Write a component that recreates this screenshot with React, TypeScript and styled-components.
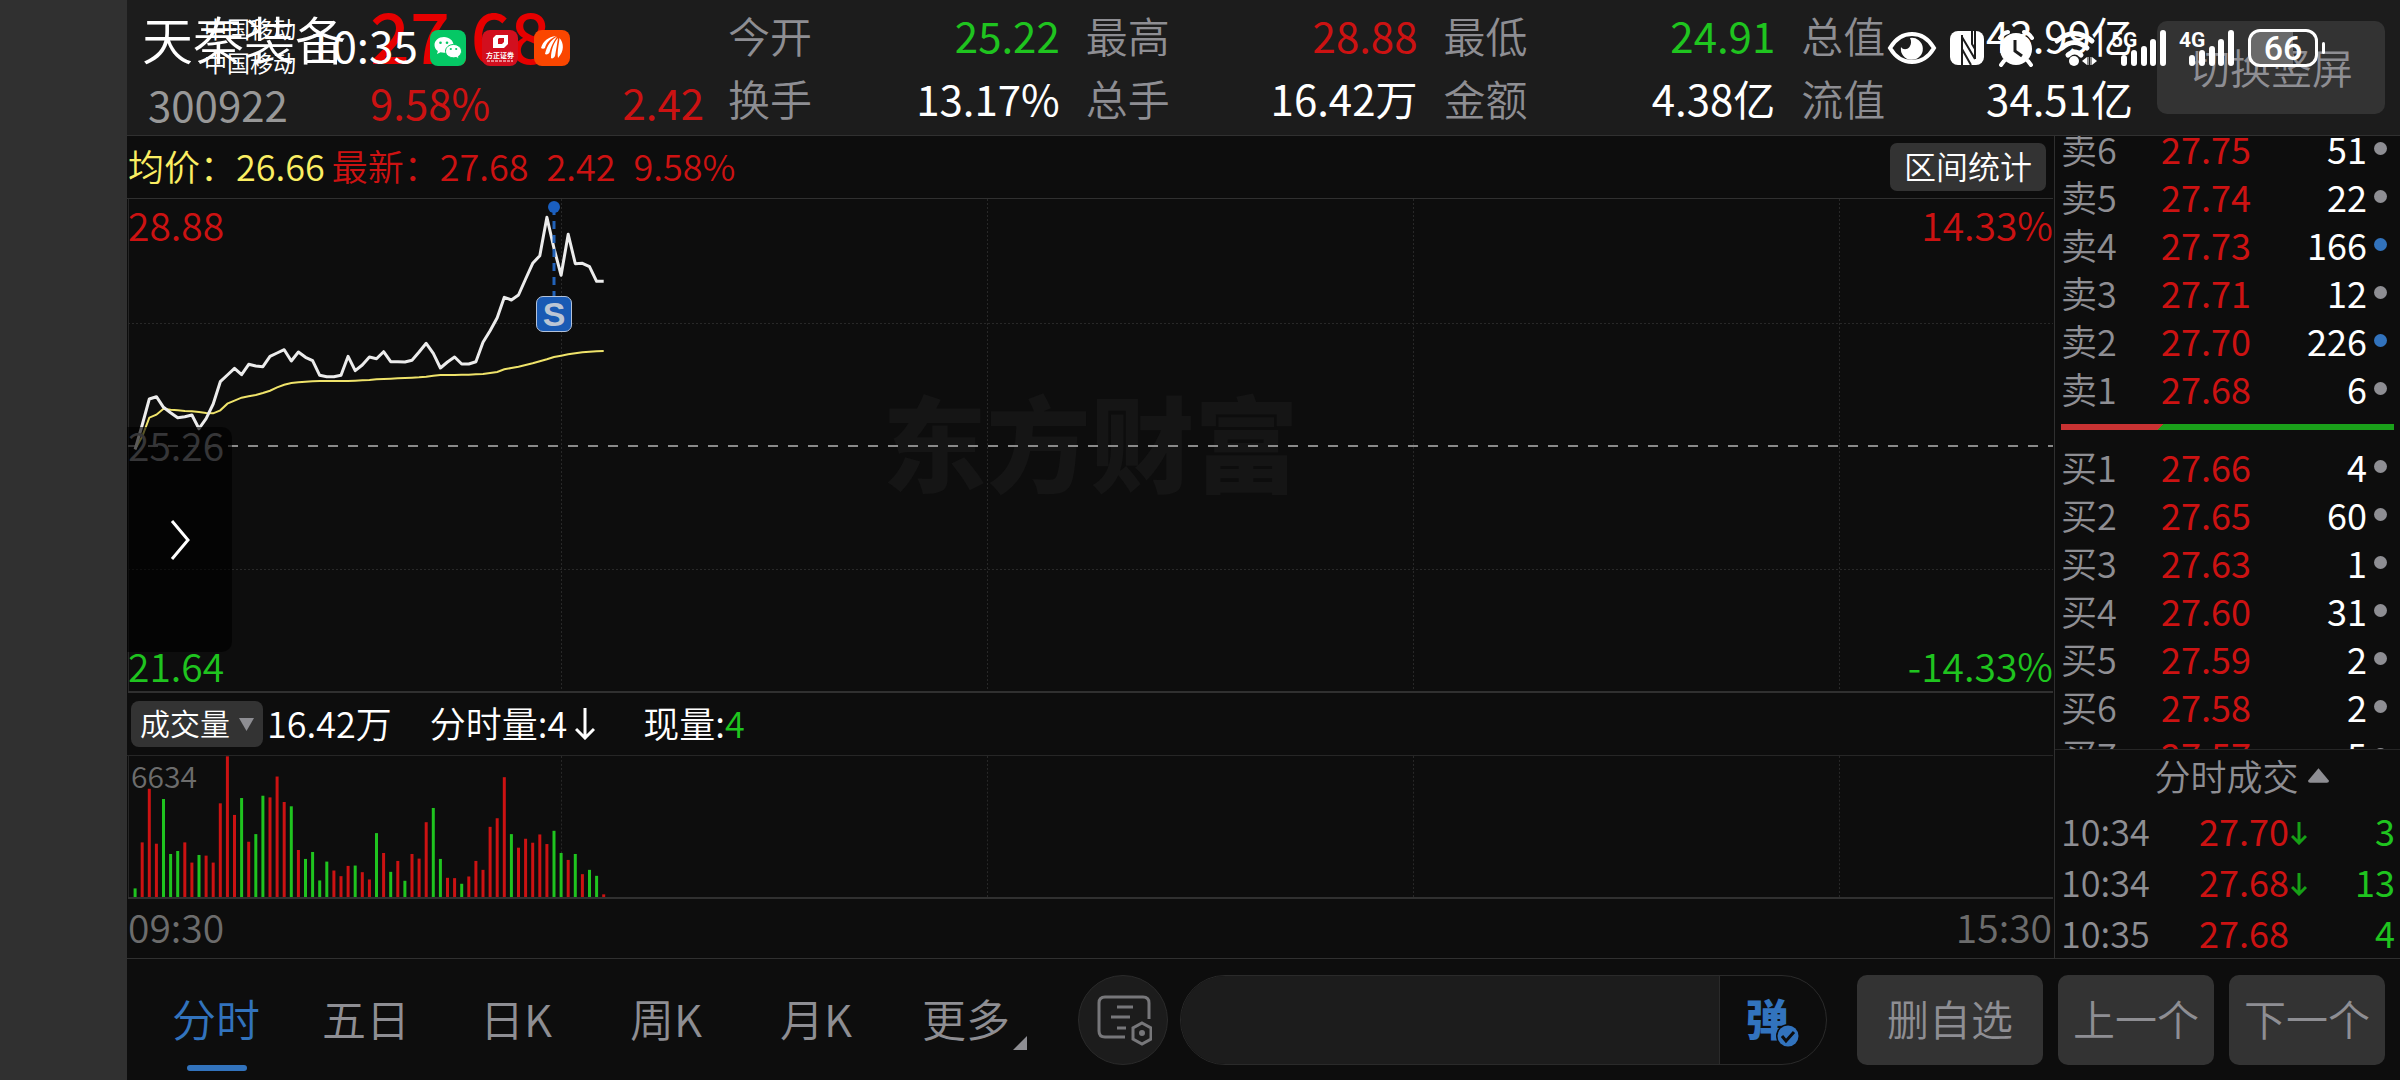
import React from "react";
import styled, { createGlobalStyle, css } from "styled-components";

const color = {
  gutter: "#303030",
  page: "#0d0d0d",
  header: "#1c1c1c",
  line: "#303030",
  button: "#333333",
  grey: "#8e8e93",
  dim: "#6c6c6c",
  red: "#cc1212",
  green: "#1fc41f",
  yellow: "#fbee62",
  blue: "#3273bd",
  white: "#ffffff",
};

type Tone = "grey" | "dim" | "red" | "green" | "yellow" | "white";

const toneWeight = (tone: Tone) => (tone === "grey" || tone === "dim" ? 350 : 400);

const Global = createGlobalStyle`
  * { box-sizing: border-box; }
  body {
    margin: 0;
    background: ${color.page};
    font-family: "Noto Sans CJK SC", "Noto Sans", sans-serif;
    font-weight: 350;
  }
  button, input, select {
    font: inherit;
    color: inherit;
    border: 0;
    margin: 0;
    padding: 0;
    background: none;
  }
`;

const Screen = styled.div`
  position: relative;
  display: flex;
  height: 100vh;
  overflow: hidden;
  padding-left: 127px;
  background: ${color.gutter};
  color: ${color.white};
`;

const Terminal = styled.div`
  flex: 1;
  min-width: 0;
  display: flex;
  flex-direction: column;
  background: ${color.page};
`;

const Text = styled.span<{ $tone?: Tone }>`
  color: ${(p) => color[p.$tone ?? "white"]};
  white-space: nowrap;
`;

/* ---------- header ---------- */

const Header = styled.header`
  display: flex;
  height: 136px;
  padding: 0 15px;
  background: ${color.header};
  border-bottom: 1px solid ${color.line};
  font-size: 42px;
`;

const Identity = styled.div`
  width: 228px;
  padding-top: 3px;
`;

const StockName = styled.h1`
  margin: 0;
  font-size: 51px;
  font-weight: 350;
  line-height: 70px;
  white-space: nowrap;
`;

const StockCode = styled.div`
  padding-left: 6px;
  line-height: 62px;
  color: #989898;
  font-weight: 400;
`;

const Quote = styled.div`
  width: 334px;
`;

const LastPrice = styled.div`
  font-size: 70px;
  font-weight: 500;
  line-height: 68px;
  color: #e60000;
`;

const Change = styled.div`
  display: flex;
  justify-content: space-between;
  line-height: 68px;
  color: ${color.red};
  font-weight: 400;
`;

const Stats = styled.dl`
  flex: 1;
  display: grid;
  grid-template-columns: repeat(4, 1fr);
  grid-auto-rows: 63px;
  column-gap: 26px;
  margin: 0 24px;
  padding-top: 3px;
  line-height: 63px;
`;

const Stat = styled.div`
  display: flex;
  justify-content: space-between;
`;

const StatLabel = styled.dt`
  color: ${color.grey};
`;

const StatValue = styled.dd<{ $tone: Tone }>`
  margin: 0;
  color: ${(p) => color[p.$tone]};
  font-weight: ${(p) => toneWeight(p.$tone)};
`;

const Button = styled.button<{ $width: number; $height: number }>`
  flex: none;
  width: ${(p) => p.$width}px;
  height: ${(p) => p.$height}px;
  border-radius: 10px;
  background: ${color.button};
  color: ${color.grey};
  white-space: nowrap;
`;

const RotateButton = styled(Button)`
  margin-top: 21px;
  padding-bottom: 4px;
  font-size: 41px;
`;

/* ---------- system status bar, drawn over the header ---------- */

const StatusBar = styled.div`
  position: absolute;
  top: 0;
  left: 0;
  right: 0;
  height: 96px;
  padding: 0 82px 0 204px;
  display: flex;
  align-items: center;
  pointer-events: none;
`;

const Carriers = styled.div`
  width: 104px;
  font-size: 23px;
  font-weight: 400;
  line-height: 34px;
  padding-bottom: 6px;
`;

const Clock = styled.time`
  width: 122px;
  padding-bottom: 8px;
  font-size: 44px;
  font-weight: 400;
  line-height: 60px;
`;

const IconRow = styled.div<{ $gap: number }>`
  display: flex;
  align-items: center;
  gap: ${(p) => p.$gap}px;
  svg { display: block; flex: none; overflow: visible; }
`;

const Spring = styled.div`
  flex: 1;
`;

const Battery = styled.div`
  position: relative;
  display: flex;
  align-items: center;
  justify-content: center;
  width: 70px;
  height: 38px;
  border: 3px solid ${color.white};
  border-radius: 12px;
  background: linear-gradient(90deg, #6a6a6a 66%, transparent 66%);
  font-family: Roboto, sans-serif;
  font-size: 34px;
  font-weight: 500;
  line-height: 32px;
  &::after {
    content: "";
    position: absolute;
    right: -10px;
    top: 10px;
    width: 3px;
    height: 12px;
    border-radius: 2px;
    background: ${color.white};
  }
`;

/* ---------- main area ---------- */

const Body = styled.main`
  flex: 1;
  min-height: 0;
  display: flex;
`;

const Charts = styled.section`
  flex: 1;
  min-width: 0;
  display: flex;
  flex-direction: column;
  padding-right: 1px;
`;

const InfoBar = styled.div`
  display: flex;
  align-items: center;
  height: 63px;
  padding-right: 7px;
  border-bottom: 1px solid ${color.line};
  font-size: 36px;
  line-height: 54px;
`;

const InfoGroup = styled.div<{ $tone: Tone }>`
  display: flex;
  gap: 18px;
  margin-right: 6px;
  padding: 0 0 4px 1px;
  color: ${(p) => color[p.$tone]};
`;

const RangeButton = styled(Button)`
  margin-left: auto;
  border-radius: 7px;
  color: ${color.white};
  font-size: 32px;
  line-height: 44px;
  padding-bottom: 4px;
`;

const Plot = styled.div<{ $height?: number }>`
  position: relative;
  ${(p) => (p.$height ? css`height: ${p.$height}px;` : css`flex: 1; min-height: 0;`)}
  margin-left: 1px;
  border-bottom: 2px solid ${color.line};
  > svg {
    position: relative;
    display: block;
    width: 100%;
    height: 100%;
  }
`;

const Watermark = styled.div`
  position: absolute;
  inset: 0;
  display: flex;
  align-items: center;
  justify-content: center;
  padding-bottom: 10px;
  color: #151515;
  font-size: 104px;
  font-weight: 900;
  line-height: 120px;
`;

const AxisLabel = styled.span<{ $tone: Tone; $v: "top" | "middle" | "bottom"; $h: "left" | "right" }>`
  position: absolute;
  ${(p) => p.$h}: 0;
  ${(p) =>
    p.$v === "top"
      ? css`top: 0;`
      : p.$v === "bottom"
      ? css`bottom: 0;`
      : css`top: calc(50% - 26px);`}
  color: ${(p) => color[p.$tone]};
  font-size: 39px;
  line-height: ${(p) => (p.$v === "bottom" ? 52 : 50)}px;
`;

const VolumeMax = styled.span`
  position: absolute;
  top: 0;
  left: 3px;
  color: ${color.dim};
  font-size: 30px;
  line-height: 38px;
`;

const SellMarker = styled.span`
  position: absolute;
  top: 97px;
  left: 408px;
  width: 36px;
  height: 36px;
  border: 1px solid #b4c2d8;
  border-radius: 7px;
  background: #195ab4;
  color: #bcc6d4;
  font-family: "Liberation Sans", sans-serif;
  font-size: 34px;
  font-weight: 700;
  line-height: 34px;
  text-align: center;
`;

const Drawer = styled.button`
  position: absolute;
  left: -1px;
  top: 228px;
  width: 105px;
  height: 225px;
  border-radius: 0 10px 10px 0;
  background: rgba(0, 0, 0, 0.62);
  display: flex;
  align-items: center;
  justify-content: center;
`;

const VolumeBar = styled.div`
  display: flex;
  align-items: center;
  height: 63px;
  padding-left: 4px;
  border-bottom: 1px solid #262626;
  font-size: 36px;
  line-height: 54px;
`;

const VolumeItem = styled.span<{ $after: number }>`
  display: flex;
  align-items: center;
  margin-right: ${(p) => p.$after}px;
  padding-bottom: 4px;
  white-space: nowrap;
  svg { margin: 4px 0 0 8px; }
`;

const Picker = styled.label`
  display: flex;
  align-items: center;
  width: 132px;
  height: 46px;
  margin-right: 4px;
  padding: 0 9px;
  border-radius: 8px;
  background: ${color.button};
`;

const PickerSelect = styled.select`
  appearance: none;
  flex: 1;
  min-width: 0;
  height: 46px;
  padding-bottom: 4px;
  font-size: 30px;
  line-height: 42px;
  outline: none;
`;

const TimeAxis = styled.div`
  display: flex;
  justify-content: space-between;
  height: 59px;
  padding: 0 1px;
  color: ${color.dim};
  font-size: 39px;
  line-height: 54px;
`;

/* ---------- order book ---------- */

const Side = styled.aside`
  flex: none;
  display: flex;
  flex-direction: column;
  width: 346px;
  border-left: 1px solid ${color.line};
  font-size: 36px;
`;

const Book = styled.div`
  flex: 1;
  min-height: 0;
  overflow: hidden;
`;

const BookScroll = styled.div`
  margin-top: -12px;
`;

const Table = styled.table`
  width: 100%;
  table-layout: fixed;
  border-collapse: collapse;
`;

const Cell = styled.td<{ $tone: Tone; $row: number; $width?: number; $align?: string }>`
  padding: 0;
  height: ${(p) => p.$row}px;
  line-height: ${(p) => p.$row}px;
  ${(p) => p.$width && css`width: ${p.$width}px;`}
  text-align: ${(p) => p.$align ?? "left"};
  color: ${(p) => color[p.$tone]};
  font-weight: ${(p) => toneWeight(p.$tone)};
  white-space: nowrap;
  &:first-child { padding-left: 6px; }
  svg { vertical-align: 1px; margin-left: 2px; }
`;

const Dot = styled.i<{ $big: boolean }>`
  display: block;
  width: 13px;
  height: 13px;
  margin-left: 7px;
  border-radius: 50%;
  background: ${(p) => (p.$big ? color.blue : color.grey)};
`;

const Ratio = styled.div`
  display: flex;
  height: 30px;
  padding: 12px 6px 12px 6px;
`;

const RatioPart = styled.div<{ $sell?: boolean }>`
  flex: ${(p) => (p.$sell ? 71 : 29)};
  background: ${(p) =>
    p.$sell ? "linear-gradient(135deg, #c83232 4px, #1aa01a 4px)" : "#c83232"};
`;

const TradesTitle = styled.button`
  display: flex;
  align-items: center;
  justify-content: center;
  gap: 9px;
  height: 56px;
  padding: 0 0 4px 28px;
  border-top: 1px solid #262626;
  color: ${color.grey};
  line-height: 51px;
`;

/* ---------- bottom bar ---------- */

const Footer = styled.footer`
  display: flex;
  align-items: center;
  height: 122px;
  padding: 0 15px;
  border-top: 1px solid ${color.line};
`;

const Tabs = styled.nav`
  display: flex;
  margin-right: 36px;
`;

const Tab = styled.button<{ $active?: boolean }>`
  position: relative;
  width: 150px;
  height: 121px;
  padding: 0 2px 4px 0;
  color: ${(p) => (p.$active ? color.blue : color.grey)};
  font-size: 44px;
  ${(p) =>
    p.$active &&
    css`
      &::after {
        content: "";
        position: absolute;
        left: 45px;
        bottom: 9px;
        width: 60px;
        height: 6px;
        border-radius: 3px;
        background: ${color.blue};
      }
    `}
  svg {
    position: absolute;
    right: 15px;
    bottom: 30px;
  }
`;

const RoundButton = styled.button`
  display: flex;
  align-items: center;
  justify-content: center;
  width: 90px;
  height: 90px;
  margin-right: 12px;
  border: 1px solid #2a2a2a;
  border-radius: 50%;
  background: ${color.header};
`;

const Composer = styled.div`
  flex: 1;
  display: flex;
  height: 90px;
  margin-right: 30px;
  overflow: hidden;
  border: 1px solid #2a2a2a;
  border-radius: 45px;
`;

const ComposerInput = styled.input`
  flex: 1;
  min-width: 0;
  padding: 0 40px;
  background: ${color.header};
  outline: none;
  font-size: 36px;
`;

const DanmuButton = styled.button`
  position: relative;
  width: 107px;
  padding: 0 12px 6px 0;
  border-left: 1px solid #2a2a2a;
  color: ${color.blue};
  font-size: 43px;
  font-weight: 900;
  svg {
    position: absolute;
    left: 56px;
    bottom: 16px;
  }
`;

const Actions = styled.div`
  display: flex;
  gap: 15px;
  font-size: 42px;
  ${Button} { padding-bottom: 4px; }
`;

/* ---------- data ---------- */

const stats: [string, string, Tone][] = [
  ["今开", "25.22", "green"],
  ["最高", "28.88", "red"],
  ["最低", "24.91", "green"],
  ["总值", "43.99亿", "white"],
  ["换手", "13.17%", "white"],
  ["总手", "16.42万", "white"],
  ["金额", "4.38亿", "white"],
  ["流值", "34.51亿", "white"],
];

const sells: [string, string, number][] = [
  ["卖6", "27.75", 51],
  ["卖5", "27.74", 22],
  ["卖4", "27.73", 166],
  ["卖3", "27.71", 12],
  ["卖2", "27.70", 226],
  ["卖1", "27.68", 6],
];

const buys: [string, string, number][] = [
  ["买1", "27.66", 4],
  ["买2", "27.65", 60],
  ["买3", "27.63", 1],
  ["买4", "27.60", 31],
  ["买5", "27.59", 2],
  ["买6", "27.58", 2],
  ["买7", "27.57", 5],
];

const trades: [string, string, boolean, number][] = [
  ["10:34", "27.70", true, 3],
  ["10:34", "27.68", true, 13],
  ["10:35", "27.68", false, 4],
];

const MINUTE = 7.1;

// One value a minute, in thirds of a plot unit, counted down from 57 at the upper edge.
const price = [
  808, 735, 657, 650, 682, 698, 713, 710, 705, 746, 716, 672, 605, 585, 565, 584, 553, 558, 560, 529,
  519, 509, 543, 516, 532, 542, 586, 590, 590, 586, 529, 572, 555, 531, 536, 515, 545, 545, 546, 541,
  516, 490, 520, 564, 546, 531, 552, 552, 545, 487, 452, 413, 352, 360, 345, 297, 250, 227, 112, 205,
  286, 163, 251, 250, 260, 304, 304,
];
const average = [
  808, 770, 713, 704, 686, 689, 691, 693, 694, 696, 699, 700, 691, 671, 662, 653, 649, 645, 639, 632,
  622, 614, 609, 607, 605, 604, 603, 603, 603, 603, 603, 602, 601, 600, 598, 597, 596, 595, 594, 593,
  592, 590, 587, 585, 585, 585, 584, 584, 583, 582, 579, 576, 568, 564, 560, 555, 550, 544, 538, 531,
  527, 523, 520, 517, 515, 514, 513,
];

const toPoints = (values: number[]) =>
  values.map((v, i) => `${((i + 1) * MINUTE).toFixed(1)},${((v - 57) / 3).toFixed(1)}`).join(" ");

// Direction of the minute and the height of its bar, in thirds of a plot unit.
const volume =
  "g26 r165 r327 r161 g296 g130 g139 r165 r104 g127 r125 r104 r283 r425 r248 g299 r167 g190 g306 r301 " +
  "r364 r287 g274 r142 g115 g136 g50 g107 r80 r63 r94 g95 r75 r53 g193 r133 g76 r109 g49 r130 r116 " +
  "r226 g269 g115 r58 r57 g40 r62 r109 r82 r212 r238 r362 g190 r149 r176 r164 r189 r160 g200 g133 " +
  "r112 g130 r69 g82 g64 r8";

const gridX = [433, 859, 1285, 1711];

/* ---------- drawings ---------- */

const WeChatIcon = () => (
  <svg width="36" height="36" viewBox="0 0 36 36">
    <rect width="36" height="36" rx="8" fill="#05c865" />
    <path d="M14 7c-5.300 0-9.500 3.500-9.500 8 0 2.500 1.300 4.700 3.400 6.100l-.9 3 3.500-1.800c1.100.3 2.300.5 3.500.5 5.300 0 9.500-3.500 9.500-7.800S19.300 7 14 7z" fill="#fff" />
    <path d="M23.500 14.500c-4.500 0-8 3-8 6.700s3.500 6.600 8 6.600c1 0 1.900-.1 2.700-.4l3 1.600-.8-2.600c1.900-1.200 3.100-3.100 3.100-5.200 0-3.700-3.500-6.700-8-6.700z" fill="#fff" stroke="#05c865" />
    <g fill="#05c865">
      <circle cx="10.500" cy="12.700" r="1.300" />
      <circle cx="17" cy="12.700" r="1.300" />
      <circle cx="20.800" cy="19" r="1.100" />
      <circle cx="26.200" cy="19" r="1.100" />
    </g>
  </svg>
);

const FounderIcon = () => (
  <svg width="36" height="36" viewBox="0 0 36 36">
    <rect width="36" height="36" rx="8" fill="#d20f1e" />
    <path d="M14 5h12v9l-4 4H11V8zm2 4v5h4l2-2V8h-5z" fill="#fff" fillRule="evenodd" />
    <text x="18" y="28" fill="#fff" fontSize="7" fontWeight="700" textAnchor="middle">方正证券</text>
    <path d="M5 31h26" stroke="#fff" strokeDasharray="3 1" />
  </svg>
);

const EastmoneyIcon = () => (
  <svg width="36" height="36" viewBox="0 0 36 36">
    <rect width="36" height="36" rx="8" fill="#fa4600" />
    <g fill="#fff">
      <path d="M7 18C9 11 14 7 22 6 16 9 12 13 11 18c-1 1-3 1-4 0z" />
      <path d="M11 24C13 15 17 10 23 6.500c-4 6-6 10-7.500 16-1 2-3.500 2.500-4.500 1.500z" />
      <path d="M17 28c0-8 3-16 7-20-1 7-2 12-3 18-1 2-3 3-4 2z" />
      <path d="M25.500 8c4.500 5 5 13-1.500 20-1-7 1-14 1.500-20z" />
    </g>
  </svg>
);

const EyeIcon = () => (
  <svg width="48" height="36" viewBox="0 0 48 36">
    <path d="M2 18C8 8 15 4 24 4s16 4 22 14c-6 10-13 14-22 14S8 28 2 18z" fill="none" stroke="#fff" strokeWidth="4" />
    <path d="M22 8a11 11 0 1 1-9 9c2 3 6 3 8.500 0 2-3 2-6 .5-9z" fill="#fff" />
  </svg>
);

const NfcIcon = () => (
  <svg width="34" height="34" viewBox="0 0 34 34">
    <rect width="34" height="34" rx="8" fill="#fff" />
    <path d="M12 4v30M12 6l13 22M22 0v13l3 5M12 18l9 16M25 28V0" fill="none" stroke="#1c1c1c" strokeWidth="2" />
  </svg>
);

const AlarmIcon = () => (
  <svg width="42" height="36" viewBox="0 0 42 36">
    <circle cx="18" cy="19" r="16" fill="#fff" />
    <path d="M2 8q3-5 8-6M34 8q-3-5-8-6M6 31l-3 4M30 31l3 4" fill="none" stroke="#fff" strokeWidth="4" strokeLinecap="round" />
    <path d="M17 10v11l7 5" fill="none" stroke="#1c1c1c" strokeWidth="3" />
  </svg>
);

const WifiIcon = () => (
  <svg width="44" height="36" viewBox="0 0 44 36">
    <g fill="none" stroke="#fff" strokeWidth="5" strokeLinecap="round">
      <path d="M3 11q17-15 35 0" />
      <path d="M8 18q12-11 25 0" />
      <path d="M14 25q7-6 13 0" />
    </g>
    <circle cx="20" cy="31" r="5" fill="#fff" />
    <path d="M28 31l5-4v8zM43 31l-5-4v8z" fill="#fff" />
    <path d="M34 27v8M37 27v8" stroke="#fff" strokeWidth="1" />
  </svg>
);

const SignalIcon = ({ label }: { label: string }) => (
  <svg width="54" height="38" viewBox="0 0 54 38">
    <text x="-1" y="18" fill="#fff" fontFamily="Roboto, sans-serif" fontSize="21" fontWeight="700">{label}</text>
    <g stroke="#fff" strokeWidth="6" strokeLinecap="round">
      <path d="M12 29v5M22 24v10M32 20v14M41 13v21M51 4v30" />
    </g>
  </svg>
);

const DownArrow = ({ tone, width, height }: { tone: string; width: number; height: number }) => (
  <svg width={width} height={height} viewBox={`0 0 ${width} ${height}`} fill="none" stroke={tone} strokeWidth="3">
    <path d={`M${width / 2} 0V${height - 2}M1 ${height - width / 2 - 1}L${width / 2} ${height - 2}L${width - 1} ${height - width / 2 - 1}`} />
  </svg>
);

const NoteIcon = () => (
  <svg width="58" height="52" viewBox="0 0 58 52" fill="none" stroke="#77777a" strokeWidth="3">
    <path d="M31 43H11q-6 0-6-6V9q0-6 6-6h38q6 0 6 6v16" />
    <path d="M23 13h16M17 23h19M23 34h9" />
    <path d="M48 29l9 5v11l-9 5-9-5V34z" />
    <circle cx="48" cy="39" r="2" fill="#77777a" stroke="#77777a" strokeWidth="2" />
  </svg>
);

const Grid = ({ height }: { height: number }) => (
  <g stroke="#282828" strokeDasharray="2 2">
    {gridX.map((x) => (
      <path key={x} d={`M${x}.5 0V${height}`} />
    ))}
  </g>
);

const PriceChart = () => (
  <svg viewBox="0 0 1925 492" preserveAspectRatio="none" role="img" aria-label="分时">
    <path d="M0.500 0V492" stroke="#262626" />
    <Grid height={492} />
    <path d="M0 124.500H1925M0 370.500H1925" stroke="#282828" strokeDasharray="2 2" />
    <path d="M0 247H1925" stroke="#8a8a8a" strokeWidth="2" strokeDasharray="10 10" />
    <polyline points={toPoints(average)} fill="none" stroke="#efe36a" strokeWidth="2" />
    <polyline points={toPoints(price)} fill="none" stroke="#ececec" strokeWidth="3" strokeLinejoin="round" />
    <path d="M426 8V98" stroke="#2262b8" strokeWidth="3" strokeDasharray="8 6" />
    <circle cx="426" cy="8" r="6" fill="#1a5fc0" />
  </svg>
);

const VolumeChart = () => (
  <svg viewBox="0 0 1925 142" preserveAspectRatio="none" role="img" aria-label="成交量">
    <path d="M0.500 0V142" stroke="#262626" />
    <Grid height={142} />
    {volume.split(" ").map((bar, i) => {
      const height = Number(bar.slice(1)) / 3;
      return (
        <rect
          key={i}
          x={(i + 1) * MINUTE - 1.5}
          y={142 - height}
          width="3"
          height={height}
          fill={bar[0] === "r" ? color.red : color.green}
        />
      );
    })}
  </svg>
);

const BookTable = ({ rows, label }: { rows: [string, string, number][]; label: string }) => (
  <Table aria-label={label}>
    <tbody>
      {rows.map(([name, value, amount]) => (
        <tr key={name}>
          <Cell $row={48} $tone="grey" $width={106}>{name}</Cell>
          <Cell $row={48} $tone="red" $width={104}>{value}</Cell>
          <Cell $row={48} $tone="white" $align="right">{amount}</Cell>
          <Cell $row={48} $tone="grey" $width={33}>
            <Dot $big={amount > 100} />
          </Cell>
        </tr>
      ))}
    </tbody>
  </Table>
);

export default function App() {
  return (
    <>
      <Global />
      <Screen>
        <Terminal>
          <Header>
            <Identity>
              <StockName>天秦装备</StockName>
              <StockCode>300922</StockCode>
            </Identity>
            <Quote>
              <LastPrice>27.68</LastPrice>
              <Change>
                <span>9.58%</span>
                <span>2.42</span>
              </Change>
            </Quote>
            <Stats>
              {stats.map(([label, value, tone]) => (
                <Stat key={label}>
                  <StatLabel>{label}</StatLabel>
                  <StatValue $tone={tone}>{value}</StatValue>
                </Stat>
              ))}
            </Stats>
            <RotateButton $width={228} $height={93}>切换竖屏</RotateButton>
          </Header>

          <Body>
            <Charts>
              <InfoBar>
                <InfoGroup $tone="yellow">
                  <span>均价：26.66</span>
                </InfoGroup>
                <InfoGroup $tone="red">
                  <span>最新：27.68</span>
                  <span>2.42</span>
                  <span>9.58%</span>
                </InfoGroup>
                <RangeButton $width={156} $height={48}>区间统计</RangeButton>
              </InfoBar>

              <Plot>
                <Watermark>东方财富</Watermark>
                <PriceChart />
                <AxisLabel $tone="red" $v="top" $h="left">28.88</AxisLabel>
                <AxisLabel $tone="red" $v="top" $h="right">14.33%</AxisLabel>
                <AxisLabel $tone="grey" $v="middle" $h="left">25.26</AxisLabel>
                <AxisLabel $tone="green" $v="bottom" $h="left">21.64</AxisLabel>
                <AxisLabel $tone="green" $v="bottom" $h="right">-14.33%</AxisLabel>
                <SellMarker>S</SellMarker>
                <Drawer aria-label="展开">
                  <svg width="20" height="42" viewBox="0 0 20 42" fill="none" stroke="#fff" strokeWidth="3">
                    <path d="M2 2l16 19L2 40" />
                  </svg>
                </Drawer>
              </Plot>

              <VolumeBar>
                <Picker>
                  <PickerSelect aria-label="指标" defaultValue="成交量">
                    <option>成交量</option>
                  </PickerSelect>
                  <svg width="15" height="13" viewBox="0 0 15 13">
                    <path d="M0 0h15L7.500 13z" fill={color.grey} />
                  </svg>
                </Picker>
                <VolumeItem $after={38}>16.42万</VolumeItem>
                <VolumeItem $after={48}>
                  分时量:4
                  <DownArrow tone={color.white} width={20} height={32} />
                </VolumeItem>
                <VolumeItem $after={0}>
                  现量:<Text $tone="green">4</Text>
                </VolumeItem>
              </VolumeBar>

              <Plot $height={143}>
                <VolumeChart />
                <VolumeMax>6634</VolumeMax>
              </Plot>

              <TimeAxis>
                <span>09:30</span>
                <span>15:30</span>
              </TimeAxis>
            </Charts>

            <Side>
              <Book>
                <BookScroll>
                  <BookTable rows={sells} label="卖盘" />
                  <Ratio>
                    <RatioPart />
                    <RatioPart $sell />
                  </Ratio>
                  <BookTable rows={buys} label="买盘" />
                </BookScroll>
              </Book>
              <TradesTitle>
                分时成交
                <svg width="21" height="15" viewBox="0 0 20 14">
                  <path d="M10 0L20 12q0 2-2 2H2q-2 0-2-2z" fill={color.grey} />
                </svg>
              </TradesTitle>
              <Table aria-label="分时成交">
                <tbody>
                  {trades.map(([time, value, falling, amount], i) => (
                    <tr key={i}>
                      <Cell $row={51} $tone="grey" $width={144}>{time}</Cell>
                      <Cell $row={51} $tone="red" $width={120}>
                        {value}
                        {falling && <DownArrow tone="#16a016" width={16} height={23} />}
                      </Cell>
                      <Cell $row={51} $tone="green" $align="right">{amount}</Cell>
                      <Cell $row={51} $tone="grey" $width={5} />
                    </tr>
                  ))}
                </tbody>
              </Table>
            </Side>
          </Body>

          <Footer>
            <Tabs>
              <Tab $active>分时</Tab>
              <Tab>五日</Tab>
              <Tab>日K</Tab>
              <Tab>周K</Tab>
              <Tab>月K</Tab>
              <Tab>
                更多
                <svg width="14" height="14" viewBox="0 0 14 14">
                  <path d="M14 0v14H0z" fill={color.grey} />
                </svg>
              </Tab>
            </Tabs>
            <RoundButton aria-label="笔记设置">
              <NoteIcon />
            </RoundButton>
            <Composer>
              <ComposerInput aria-label="弹幕" />
              <DanmuButton>
                弹
                <svg width="24" height="24" viewBox="0 0 24 24">
                  <circle cx="12" cy="12" r="12" fill={color.page} />
                  <circle cx="12" cy="12" r="10.500" fill={color.blue} />
                  <path d="M6 12l4 5 8-9" fill="none" stroke={color.page} strokeWidth="3" />
                </svg>
              </DanmuButton>
            </Composer>
            <Actions>
              <Button $width={186} $height={90}>删自选</Button>
              <Button $width={156} $height={90}>上一个</Button>
              <Button $width={156} $height={90}>下一个</Button>
            </Actions>
          </Footer>
        </Terminal>

        <StatusBar>
          <Carriers>
            <div>中国移动</div>
            <div>中国移动</div>
          </Carriers>
          <Clock>10:35</Clock>
          <IconRow $gap={16}>
            <WeChatIcon />
            <FounderIcon />
            <EastmoneyIcon />
          </IconRow>
          <Spring />
          <IconRow $gap={14}>
            <EyeIcon />
            <NfcIcon />
            <AlarmIcon />
            <WifiIcon />
            <SignalIcon label="5G" />
            <SignalIcon label="4G" />
            <Battery>66</Battery>
          </IconRow>
        </StatusBar>
      </Screen>
    </>
  );
}
